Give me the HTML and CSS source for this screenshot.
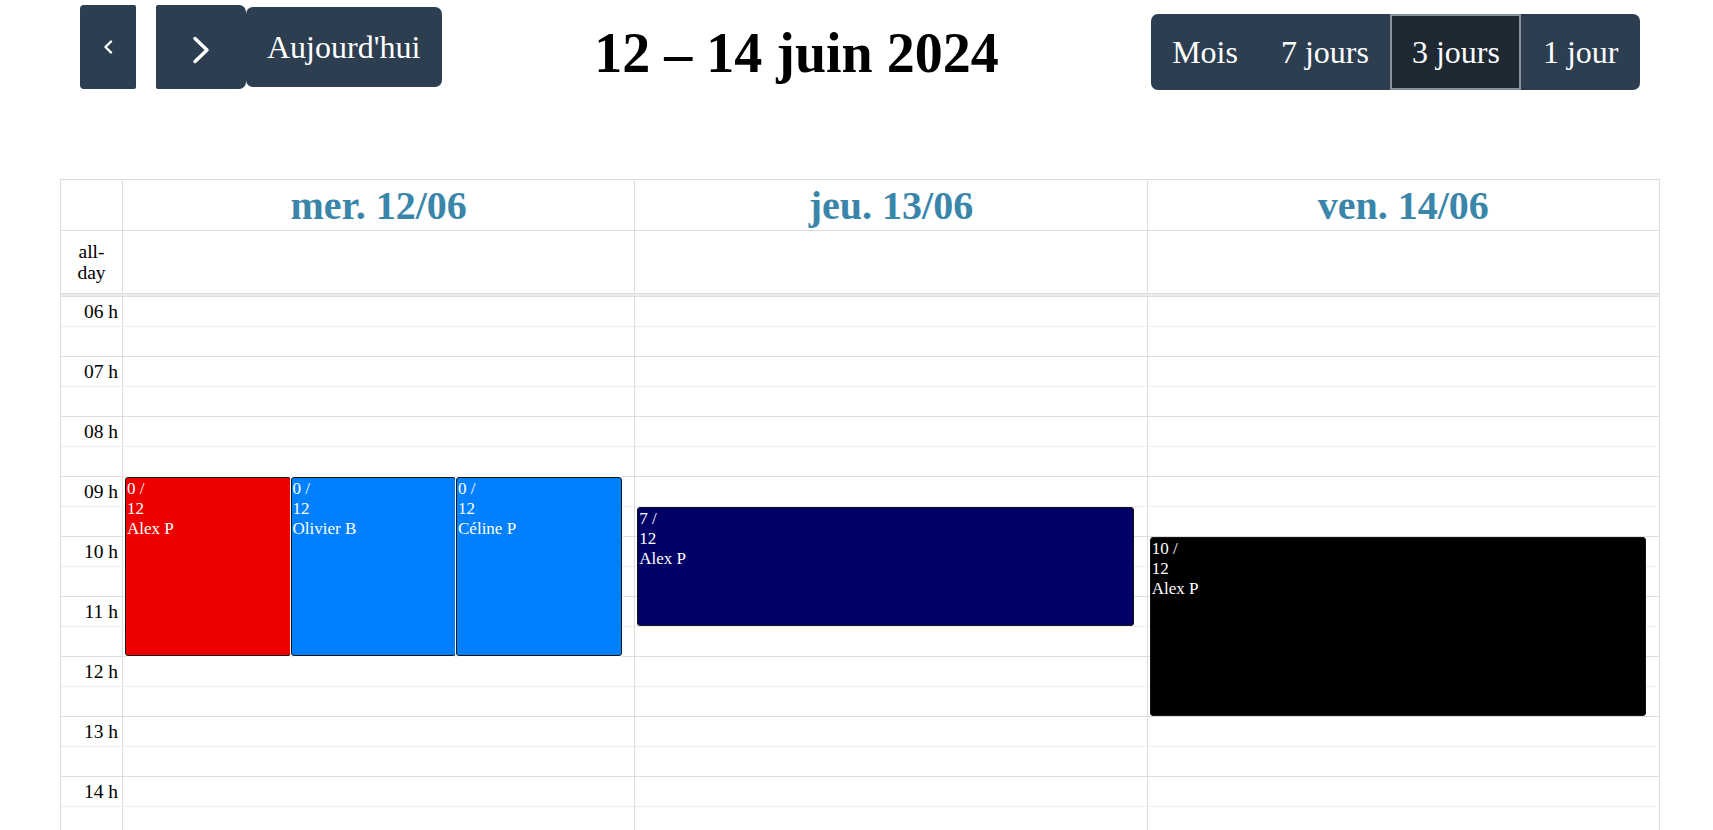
FILE: index.html
```html
<!DOCTYPE html>
<html lang="fr">
<head>
<meta charset="utf-8">
<title>Planning</title>
<link rel="stylesheet" href="styles.css">
</head>
<body>
<div class="cal">
  <div class="toolbar">
    <div class="chunk">
      <button class="btn btn-prev" aria-label="Précédent"><svg width="10" height="14" viewBox="0 0 10 14"><polyline points="8,1.5 2.5,7 8,12.5" fill="none" stroke="#fff" stroke-width="2.4" stroke-linecap="round" stroke-linejoin="round"/></svg></button>
      <button class="btn btn-next" aria-label="Suivant"><svg width="18" height="28" viewBox="0 0 18 28"><polyline points="3,2.5 15,14 3,25.5" fill="none" stroke="#fff" stroke-width="3.5" stroke-linecap="round" stroke-linejoin="round"/></svg></button>
      <button class="btn btn-today">Aujourd'hui</button>
    </div>
    <h2 class="title">12 – 14 juin 2024</h2>
    <div class="chunk views">
      <button class="vbtn">Mois</button>
      <button class="vbtn">7 jours</button>
      <button class="vbtn active">3 jours</button>
      <button class="vbtn">1 jour</button>
    </div>
  </div>

  <div class="grid">
    <div class="row head">
      <div class="cell"></div>
      <div class="cell"><span class="dayname">mer. 12/06</span></div>
      <div class="cell"><span class="dayname">jeu. 13/06</span></div>
      <div class="cell"><span class="dayname">ven. 14/06</span></div>
    </div>
    <div class="row allday">
      <div class="cell axis"><span class="allday-label">all-day</span></div>
      <div class="cell"></div>
      <div class="cell"></div>
      <div class="cell"></div>
    </div>
    <div class="divider"></div>
    <div class="timegrid">
      <div class="slots">
        <div class="slot slot-hour"><div class="slot-label">06 h</div></div>
        <div class="slot"><div class="slot-label"></div></div>
        <div class="slot slot-hour"><div class="slot-label">07 h</div></div>
        <div class="slot"><div class="slot-label"></div></div>
        <div class="slot slot-hour"><div class="slot-label">08 h</div></div>
        <div class="slot"><div class="slot-label"></div></div>
        <div class="slot slot-hour"><div class="slot-label">09 h</div></div>
        <div class="slot"><div class="slot-label"></div></div>
        <div class="slot slot-hour"><div class="slot-label">10 h</div></div>
        <div class="slot"><div class="slot-label"></div></div>
        <div class="slot slot-hour"><div class="slot-label">11 h</div></div>
        <div class="slot"><div class="slot-label"></div></div>
        <div class="slot slot-hour"><div class="slot-label">12 h</div></div>
        <div class="slot"><div class="slot-label"></div></div>
        <div class="slot slot-hour"><div class="slot-label">13 h</div></div>
        <div class="slot"><div class="slot-label"></div></div>
        <div class="slot slot-hour"><div class="slot-label">14 h</div></div>
        <div class="slot"><div class="slot-label"></div></div>
      </div>
      <div class="cols">
        <div class="col-axis"></div>
        <div class="col">
          <div class="col-events">
            <div class="event inset ev-red" style="top:180px;height:179px;left:0;width:33.333%">
              <div>0 /</div><div>12</div><div>Alex P</div>
            </div>
            <div class="event inset ev-blue" style="top:180px;height:179px;left:33.333%;width:33.333%">
              <div>0 /</div><div>12</div><div>Olivier B</div>
            </div>
            <div class="event inset ev-blue" style="top:180px;height:179px;left:66.667%;width:33.333%">
              <div>0 /</div><div>12</div><div>Céline P</div>
            </div>
          </div>
        </div>
        <div class="col">
          <div class="col-events">
            <div class="event ev-navy" style="top:210px;height:119px;left:0;width:100%">
              <div>7 /</div><div>12</div><div>Alex P</div>
            </div>
          </div>
        </div>
        <div class="col">
          <div class="col-events">
            <div class="event ev-black" style="top:240px;height:179px;left:0;width:100%">
              <div>10 /</div><div>12</div><div>Alex P</div>
            </div>
          </div>
        </div>
      </div>
    </div>
  </div>
</div>
</body>
</html>
```

FILE: styles.css
```css
* { box-sizing: border-box; }

body {
  margin: 0;
  font-family: "Liberation Serif", "Times New Roman", serif;
  color: #000;
  background: #fff;
}

.cal {
  width: 1600px;
  margin-left: 60px;
}

/* ---------- toolbar ---------- */
.toolbar {
  display: flex;
  justify-content: space-between;
  align-items: flex-start;
  padding: 0 20px;
  height: 179px;
}

.chunk {
  display: flex;
  align-items: flex-start;
}

.btn {
  background: #2c3e50;
  color: #fff;
  border: 0;
  font-family: "Liberation Serif", "Times New Roman", serif;
  font-size: 32px;
  display: flex;
  align-items: center;
  justify-content: center;
  padding: 0;
  cursor: pointer;
}

.btn-prev {
  width: 56px;
  height: 84px;
  margin-top: 5px;
  border-radius: 4px 2px 2px 4px;
}

.btn-next {
  width: 90px;
  height: 84px;
  margin-top: 5px;
  margin-left: 20px;
  padding-top: 5px;
  border-radius: 2px 7px 7px 2px;
}

.btn-today {
  height: 80px;
  margin-top: 7px;
  padding: 0 22px 0 21px;
  border-radius: 7px;
}

.title {
  margin: 21px 0 0;
  font-size: 56px;
  font-weight: bold;
  line-height: 1.15;
}

.views {
  margin-top: 14px;
  height: 76px;
  background: #2c3e50;
  border-radius: 7px;
  overflow: hidden;
}

.vbtn {
  height: 76px;
  padding: 0 21.5px;
  background: transparent;
  color: #fff;
  border: 0;
  font-family: "Liberation Serif", "Times New Roman", serif;
  font-size: 32px;
  cursor: pointer;
}

.vbtn.active {
  background: #1e2934;
  border: 2px solid #86919c;
  padding: 0 19.5px;
}

/* ---------- grid ---------- */
.grid {
  border-top: 1px solid #ddd;
  border-left: 1px solid #ddd;
}

.row {
  display: grid;
  grid-template-columns: 62px repeat(3, 1fr);
}

.cell {
  border-right: 1px solid #ddd;
  border-bottom: 1px solid #ddd;
}

.head .cell {
  height: 51px;
  display: flex;
  align-items: center;
  justify-content: center;
  padding-top: 2px;
}

.dayname {
  font-size: 40px;
  font-weight: bold;
  color: #3a86aa;
  line-height: 1.15;
}

.allday .cell {
  height: 63px;
}

.allday .axis {
  display: flex;
  align-items: center;
  justify-content: center;
}

.allday-label {
  width: min-content;
  text-align: center;
  font-size: 19.5px;
  line-height: 21px;
}

.divider {
  height: 3px;
  background: #ebebeb;
  border-bottom: 1px solid #ddd;
}

.timegrid {
  position: relative;
  height: 533px;
  overflow: hidden;
}

.slot {
  display: grid;
  grid-template-columns: 62px 1fr;
  height: 30px;
  border-bottom: 1px solid #ddd;
}

.slot-hour {
  border-bottom-style: dotted;
}

.slot-label {
  border-right: 1px solid #ddd;
  display: flex;
  align-items: center;
  justify-content: flex-end;
  padding-right: 4px;
  font-size: 19.5px;
  white-space: nowrap;
}

.cols {
  position: absolute;
  inset: 0;
  display: grid;
  grid-template-columns: 62px repeat(3, 1fr);
}

.col {
  position: relative;
  border-right: 1px solid #ddd;
}

.col-events {
  position: absolute;
  top: 0;
  bottom: 0;
  left: 2px;
  right: 2.5%;
}

/* ---------- events ---------- */
.event {
  position: absolute;
  border: 1px solid #151515;
  border-radius: 3px;
  color: #fff;
  font-size: 17px;
  padding: 1px;
  overflow: hidden;
}

.event.inset {
  box-shadow: 0 0 0 1px #fff;
}

.ev-red { background: #ee0000; }
.ev-blue { background: #0080ff; }
.ev-navy { background: #000066; }
.ev-black { background: #000; }
```
